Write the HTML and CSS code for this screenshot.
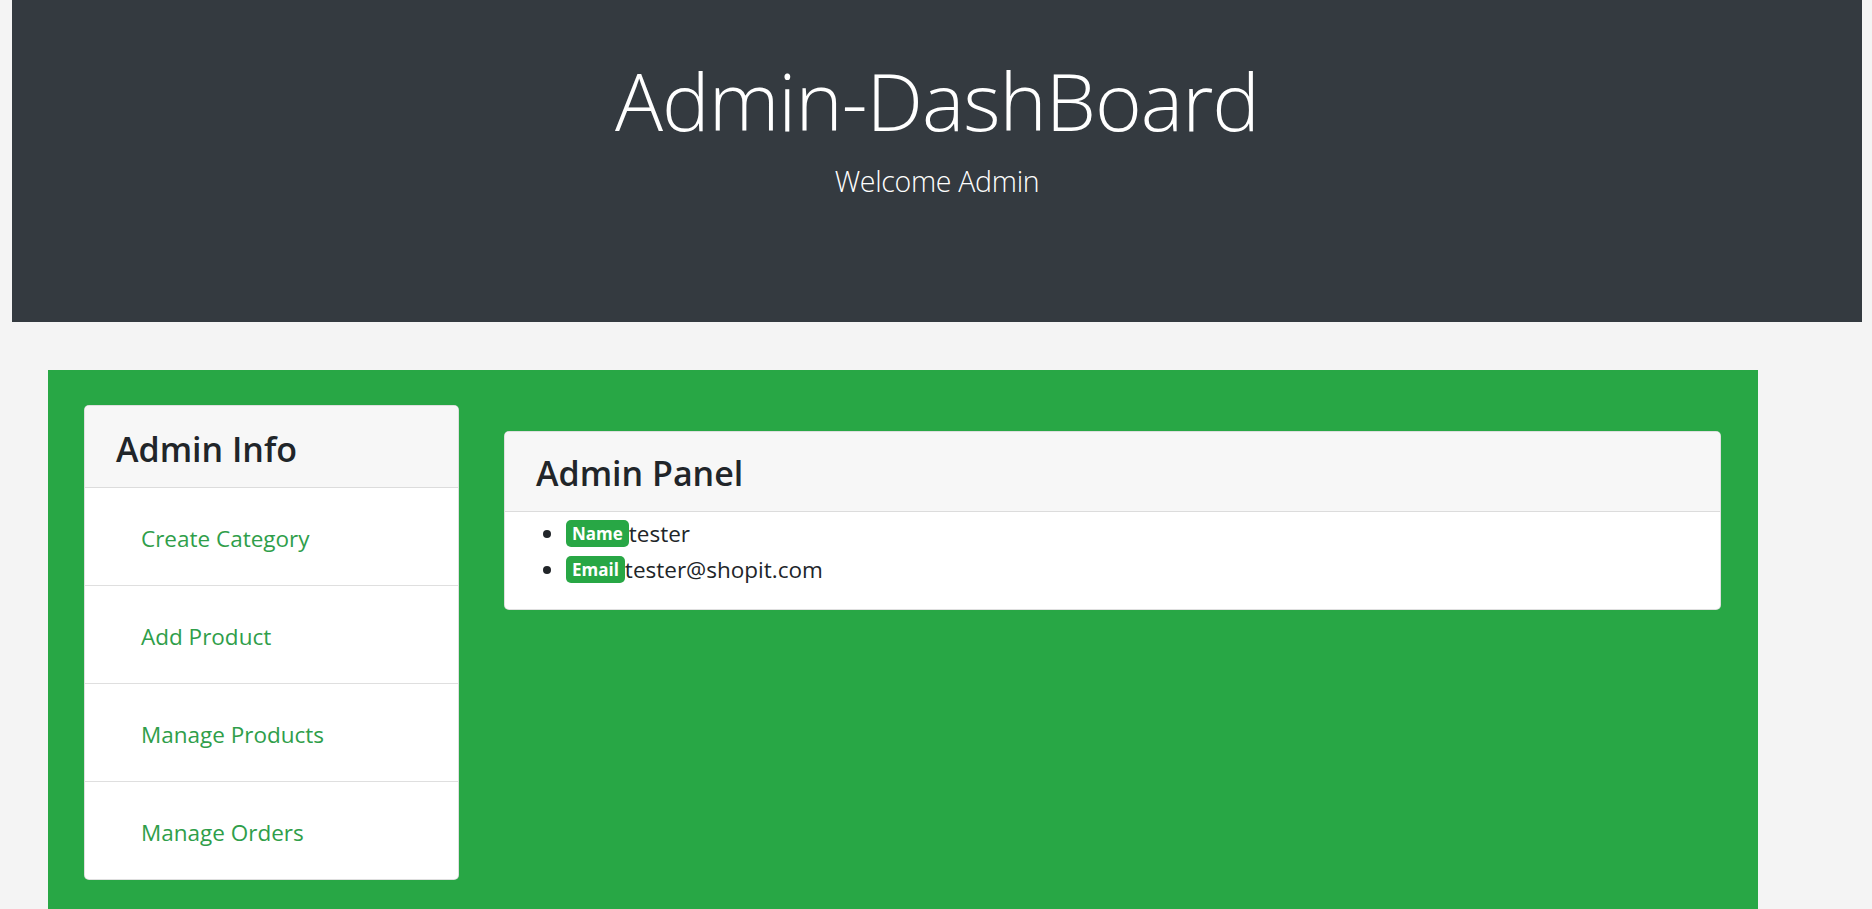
FILE: index.html
```html
<!DOCTYPE html>
<html lang="en">
<head>
<meta charset="utf-8">
<title>Admin-DashBoard</title>
<link rel="stylesheet" href="styles.css">
</head>
<body>
<header class="hero">
  <h1 class="hero-title">Admin-DashBoard</h1>
  <p class="hero-lead">Welcome Admin</p>
</header>
<main class="board">
  <div class="board-row">
    <aside class="card side-card">
      <div class="card-header"><h3 class="card-title">Admin Info</h3></div>
      <ul class="menu">
        <li class="menu-item"><a class="menu-link" href="#">Create Category</a></li>
        <li class="menu-item"><a class="menu-link" href="#">Add Product</a></li>
        <li class="menu-item"><a class="menu-link" href="#">Manage Products</a></li>
        <li class="menu-item"><a class="menu-link" href="#">Manage Orders</a></li>
      </ul>
    </aside>
    <section class="card panel-card">
      <div class="card-header"><h3 class="card-title">Admin Panel</h3></div>
      <ul class="info-list">
        <li class="info-item"><span class="badge">Name</span>tester</li>
        <li class="info-item"><span class="badge">Email</span>tester@shopit.com</li>
      </ul>
    </section>
  </div>
</main>
</body>
</html>
```

FILE: styles.css
```css
* { box-sizing: border-box; }

html, body {
  margin: 0;
  padding: 0;
  background: #f4f4f4;
  font-family: "Open Sans", "Noto Sans", "Liberation Sans", sans-serif;
  color: #212529;
  overflow: hidden;
}

.hero {
  background: #343a40;
  color: #ffffff;
  height: 322px;
  margin: 0 10px 0 12px;
  padding-top: 52px;
  text-align: center;
}

.hero-title {
  margin: 0;
  font-size: 80px;
  font-weight: 300;
  line-height: 1.2;
  letter-spacing: -1px;
}

.hero-lead {
  margin: 16px 0 0;
  font-size: 28.5px;
  font-weight: 300;
  line-height: 1.2;
  letter-spacing: -0.3px;
}

.board {
  background: #28a745;
  margin: 48px 114px 0 48px;
  padding: 35px 37px 29px 36px;
}

.board-row {
  display: flex;
  align-items: flex-start;
  gap: 45px;
}

.card {
  background: #ffffff;
  border: 1px solid rgba(0, 0, 0, 0.125);
  border-radius: 5px;
  overflow: hidden;
}

.card-header {
  background: #f7f7f7;
  border-bottom: 1px solid #dcdcdc;
  padding-left: 31px;
}

.card-title {
  margin: 0;
  font-size: 34px;
  font-weight: 600;
  line-height: 1;
  color: #212529;
}

.side-card {
  width: 375px;
  flex: none;
}

.side-card .card-header {
  height: 82px;
  padding-top: 26px;
}

.menu {
  list-style: none;
  margin: 0;
  padding: 0;
}

.menu-item {
  height: 98px;
  display: flex;
  align-items: center;
  padding: 4px 0 0 56px;
  border-top: 1px solid #dfdfdf;
}

.menu-item:first-child {
  border-top: none;
  height: 97px;
}

.menu-link {
  color: #2f9e4a;
  text-decoration: none;
  font-size: 22.5px;
}

.panel-card {
  flex: 1;
  margin-top: 26px;
}

.panel-card .card-header {
  height: 80px;
  padding-top: 24px;
}

.info-list {
  margin: 0;
  padding: 4px 0 21px 61px;
  list-style: disc;
}

.info-item {
  font-size: 22.5px;
  line-height: 36px;
}

.badge {
  display: inline-block;
  vertical-align: middle;
  position: relative;
  top: -2px;
  background: #28a745;
  color: #ffffff;
  font-size: 17px;
  font-weight: 700;
  line-height: 27px;
  height: 27px;
  padding: 0 6px;
  border-radius: 5px;
}
```
